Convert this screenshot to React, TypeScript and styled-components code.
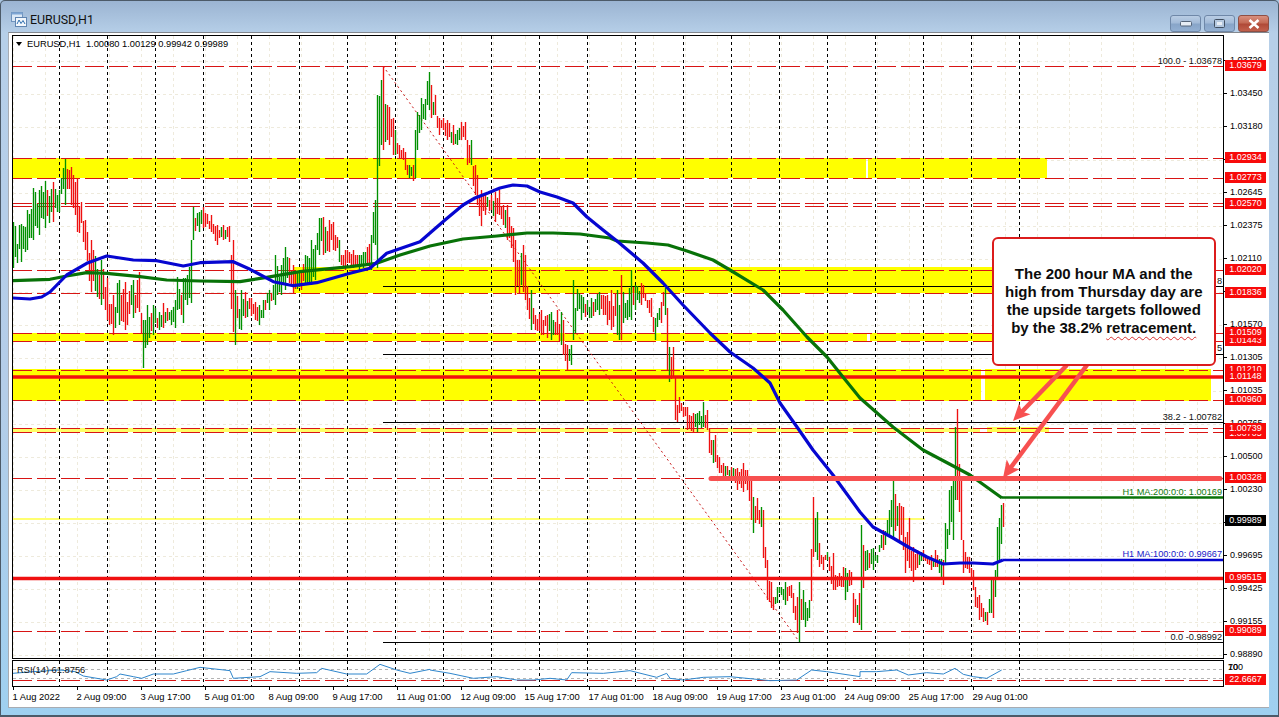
import styled, { createGlobalStyle } from "styled-components";

const GlobalStyle = createGlobalStyle`
  html, body {
    margin: 0;
    height: 100%;
    overflow: hidden;
    background: #a8c4e0;
  }
  * {
    box-sizing: border-box;
  }
`;

const labelFont = `"Liberation Sans", Arial, sans-serif`;

const Window = styled.div`
  width: 100vw;
  height: 100vh;
  display: flex;
  flex-direction: column;
  padding: 0 9px 7px 7px;
  border: 1px solid #4c5a68;
  border-bottom-width: 2px;
  border-radius: 5px 5px 0 0;
  background: linear-gradient(180deg, #9bb4d2 0, #b6cfe8 32px, #b4cde8 55%, #9fd0f0 100%);
`;

const TitleBar = styled.header`
  flex: none;
  height: 31px;
  display: flex;
  align-items: center;
  padding: 5px 0 0 3px;
`;

const TitleIcon = styled.svg`
  width: 16px;
  height: 15px;
  margin-right: 3px;
`;

const TitleText = styled.h1`
  margin: 0;
  font: 400 12.4px Roboto, sans-serif;
  color: #111;
`;

const Controls = styled.div`
  display: flex;
  gap: 3px;
  margin-left: auto;
  align-self: flex-start;
  margin-top: 9px;
`;

const WinButton = styled.div<{ $close?: boolean }>`
  width: 31px;
  height: 17px;
  display: flex;
  align-items: center;
  justify-content: center;
  border: 1px solid ${(p) => (p.$close ? "#8f4f44" : "#6f88a8")};
  border-radius: 3px;
  background: ${(p) =>
    p.$close
      ? "linear-gradient(180deg, #d8907f 0, #c46a55 45%, #b04a38 55%, #c2604c 100%)"
      : "linear-gradient(180deg, #b9cde4 0, #a3bbd8 45%, #88a5c8 55%, #93b0d2 100%)"};
`;

const Client = styled.main`
  flex: 1;
  min-height: 0;
  padding: 2px 0 0 3px;
  background: #fff;
  border: 1px solid #a8acb2;
  border-top-color: #82878e;
  border-right: none;
`;

const Frame = styled.div`
  display: grid;
  grid-template-columns: 1212px 1fr;
  grid-template-rows: 624px 28px 20px;
`;

const PlotPane = styled.div`
  position: relative;
  border: 1px solid #000;
  background: #fff;
`;

const RsiPane = styled(PlotPane)`
  margin-top: 1px;
`;

const PlotSvg = styled.svg`
  display: block;
  width: 100%;
  height: 100%;
`;

const Legend = styled.div`
  position: absolute;
  left: 3px;
  top: 2px;
  display: flex;
  align-items: center;
  font: 9.3px/12px ${labelFont};
  color: #000;
  white-space: pre;
`;

const LegendArrow = styled.span`
  width: 0;
  height: 0;
  margin-right: 5px;
  border-left: 3.5px solid transparent;
  border-right: 3.5px solid transparent;
  border-top: 4px solid #000;
`;

const ChartNote = styled.span<{ $y: number; $color?: string }>`
  position: absolute;
  right: 1px;
  top: ${(p) => p.$y - 36 - 6}px;
  font: 9.2px/12px ${labelFont};
  color: ${(p) => p.$color ?? "#111"};
  white-space: pre;
`;

const Callout = styled.div`
  position: absolute;
  left: 978.5px;
  top: 201px;
  width: 224.5px;
  height: 129px;
  padding-bottom: 1px;
  display: flex;
  align-items: center;
  justify-content: center;
  text-align: center;
  background: #fff;
  border: 2px solid #dc1c1c;
  border-radius: 6px;
  font: 700 15px/18px ${labelFont};
  color: #0c0c0c;
`;

const Squiggle = styled.span`
  text-decoration: underline wavy #d83030 1px;
  text-underline-offset: 3px;
`;

const PriceAxis = styled.div`
  position: relative;
  padding-top: 8.5px;
  font: 9px/11px ${labelFont};
  color: #000;
  height: 624px;
`;

const Tick = styled.div`
  height: 33px;
  display: flex;
  align-items: center;
  gap: 3px;
  &::before {
    content: "";
    width: 3px;
    height: 1px;
    background: #000;
  }
`;

const PriceTag = styled.div<{ $y: number; $black?: boolean }>`
  position: absolute;
  left: 1px;
  top: ${(p) => p.$y}px;
  width: 41px;
  height: 11px;
  text-align: center;
  background: ${(p) => (p.$black ? "#000" : "#f80a0a")};
  color: #fff;
`;

const RsiAxis = styled.div`
  position: relative;
  margin-top: 1px;
  font: 9px/11px ${labelFont};
  color: #000;
`;

const RsiLevel = styled.span`
  position: absolute;
  left: 4px;
  top: 2px;
`;

const RsiLabel = styled.span`
  position: absolute;
  left: 4px;
  top: 3px;
  font: 9.3px/12px ${labelFont};
  color: #111;
`;

const TimeAxis = styled.div`
  grid-column: 1 / -1;
  display: flex;
  padding-left: 1px;
  font: 9.4px/20px ${labelFont};
  color: #000;
`;

const TimeLabel = styled.div`
  flex: none;
  width: 64px;
  position: relative;
  white-space: nowrap;
  text-indent: -0.5px;
  &::before {
    content: "";
    position: absolute;
    left: 0;
    top: 0;
    width: 1px;
    height: 3px;
    background: #000;
  }
`;

type Key = [number, number, number, ("g" | "r")?];

const keys: Key[] = [
  [13, 222, 268], [20, 224, 262], [27, 210, 250], [33, 188, 240], [38, 190, 235], [44, 181, 228],
  [52, 182, 222], [58, 190, 212], [65, 159, 205, "g"], [70, 167, 205], [77, 178, 232], [84, 220, 250],
  [90, 240, 292], [100, 260, 305], [107, 278, 320], [112, 295, 335], [118, 280, 325], [125, 282, 330],
  [132, 280, 318], [138, 272, 312], [143, 320, 368, "g"], [147, 305, 345], [153, 305, 335], [158, 312, 330],
  [163, 303, 328], [170, 310, 325], [175, 300, 328], [177, 277, 310], [183, 278, 323], [187, 275, 305],
  [190, 240, 303, "g"], [193, 207, 240, "g"], [198, 212, 232], [203, 207, 228], [210, 215, 232], [216, 225, 245],
  [222, 225, 240], [228, 226, 242], [232, 240, 332, "r"], [235, 290, 345, "g"], [240, 290, 330], [244, 292, 318],
  [250, 298, 316], [254, 302, 320], [258, 305, 325], [263, 300, 318], [268, 290, 310], [272, 285, 300],
  [275, 255, 305, "g"], [280, 265, 295], [285, 247, 290], [288, 258, 283], [293, 265, 293], [300, 270, 290],
  [305, 255, 285], [310, 240, 285], [315, 245, 280], [318, 218, 255], [322, 217, 255], [328, 220, 252],
  [333, 222, 250], [338, 240, 262], [345, 250, 270], [352, 250, 268], [358, 255, 270], [363, 252, 268],
  [370, 235, 270, "g"], [374, 200, 245, "g"], [377, 95, 268, "g"], [380, 80, 145, "g"], [383, 66, 150, "r"],
  [386, 105, 140], [389, 107, 145], [392, 118, 155], [395, 130, 155], [398, 145, 158], [402, 148, 160],
  [405, 152, 170], [408, 165, 178], [412, 165, 181, "r"], [414, 130, 178, "g"], [416, 112, 150, "g"],
  [420, 98, 130], [424, 99, 120], [428, 72, 110, "g"], [431, 85, 118], [434, 95, 115], [438, 118, 135],
  [442, 118, 130], [447, 120, 140], [452, 125, 145], [456, 130, 145], [460, 122, 140], [464, 122, 140],
  [467, 140, 165], [470, 140, 165, "g"], [474, 165, 195], [477, 175, 205], [480, 190, 226], [484, 193, 215],
  [490, 195, 210], [495, 192, 222], [498, 190, 215], [503, 205, 225], [507, 205, 240], [512, 228, 262],
  [515, 240, 295], [518, 260, 293], [522, 245, 292], [525, 255, 300], [530, 290, 330], [535, 315, 330],
  [540, 310, 335], [546, 315, 338], [550, 312, 340], [556, 310, 335], [560, 312, 345], [563, 320, 355],
  [567, 345, 370], [570, 345, 365], [572, 340, 365, "g"], [573, 280, 340, "g"], [580, 295, 320], [590, 298, 318],
  [598, 292, 315], [603, 295, 315], [607, 295, 325], [611, 290, 330], [616, 290, 335, "g"], [618, 305, 340],
  [621, 275, 340, "r"], [626, 300, 320], [630, 270, 320, "g"], [634, 285, 310], [640, 283, 305], [643, 285, 298],
  [650, 298, 317], [654, 318, 340, "g"], [660, 302, 323], [664, 288, 315, "g"], [667, 308, 370, "r"],
  [669, 347, 382, "g"], [672, 347, 378], [674, 378, 420, "r"], [676, 405, 422], [679, 397, 413], [683, 407, 417],
  [687, 407, 430], [692, 413, 433], [697, 413, 432], [702, 408, 428], [703, 402, 427, "g"], [707, 410, 430],
  [709, 429, 453, "r"], [712, 440, 463, "g"], [714, 435, 462, "r"], [718, 457, 473], [723, 463, 477], [730, 467, 480],
  [737, 468, 490], [742, 463, 492], [747, 470, 490], [750, 480, 520, "r"], [752, 493, 520], [753, 497, 533, "g"],
  [757, 498, 520], [760, 507, 527], [763, 510, 558, "r"], [765, 547, 568], [767, 560, 600, "r"], [770, 582, 608],
  [773, 597, 610], [777, 587, 603], [780, 587, 595], [785, 582, 605, "g"], [790, 585, 598], [793, 593, 613],
  [797, 597, 633, "r"], [799, 582, 642, "g"], [802, 590, 620], [805, 602, 627], [808, 600, 618],
  [812, 522, 618, "g"], [813, 497, 557, "r"], [816, 512, 560], [818, 543, 567], [822, 557, 570], [827, 552, 560, "g"],
  [832, 553, 590], [835, 575, 590], [842, 567, 587], [845, 568, 600, "g"], [852, 570, 590], [853, 593, 623, "r"],
  [858, 593, 625, "r"], [861, 525, 630, "g"], [863, 545, 588], [867, 550, 570], [872, 548, 570], [877, 555, 563],
  [882, 530, 552], [883, 530, 550], [889, 510, 535], [893, 480, 538, "g"], [898, 503, 543], [902, 507, 550],
  [905, 537, 573], [909, 518, 568], [913, 547, 582, "r"], [917, 550, 568], [923, 550, 560], [930, 555, 570],
  [935, 550, 567], [942, 560, 585, "r"], [945, 523, 563, "g"], [949, 490, 535], [952, 480, 540], [955, 427, 500, "g"],
  [957, 409, 500, "r"], [960, 480, 540], [963, 540, 573, "r"], [968, 557, 573], [972, 570, 590], [975, 587, 607],
  [978, 595, 620], [983, 608, 622], [987, 612, 625, "r"], [991, 580, 613, "g"], [993, 578, 618, "r"], [995, 570, 597],
  [997, 527, 580, "g"], [999, 518, 560, "g"], [1002, 483, 540, "g"], [1003, 503, 527, "r"],
];

const rnd = (n: number) => {
  const v = Math.sin(n * 12.9898) * 43758.5453;
  return v - Math.floor(v);
};

function buildBars() {
  const green: string[] = [];
  const red: string[] = [];
  const exact = new Map<number, Key>();
  keys.forEach((k) => exact.set(Math.round((k[0] - 13) / 2), k));
  const span = (x: number) => {
    let j = 0;
    while (j < keys.length - 2 && keys[j + 1][0] < x) j++;
    const [x0, t0, b0] = keys[j];
    const [x1, t1, b1] = keys[j + 1];
    const f = Math.min(1, Math.max(0, (x - x0) / (x1 - x0)));
    return [t0 + (t1 - t0) * f, b0 + (b1 - b0) * f];
  };
  const mid = (x: number) => {
    const [t, b] = span(x);
    return (t + b) / 2;
  };
  for (let i = 0; i <= 495; i++) {
    const x = 13 + i * 2;
    const key = exact.get(i);
    // colour follows the local direction of the price, with a few bars against it
    const rising = mid(x + 5) < mid(x - 5);
    const flip = rnd(i + 7) < 0.16;
    let up = flip ? !rising : rising;
    let top: number, bottom: number;
    if (key) {
      top = key[1];
      bottom = key[2];
      if (key[3]) up = key[3] === "g";
    } else {
      const [t, b] = span(x);
      const h = b - t;
      const len = h * (0.45 + 0.3 * rnd(i));
      top = t + rnd(i + 99) * (h - len);
      bottom = top + len;
    }
    (up ? green : red).push(`M${x + 0.5} ${Math.round(top)}V${Math.round(bottom)}`);
  }
  return { green: green.join(""), red: red.join("") };
}

const bars = buildBars();

const blueMa =
  "12.7,298 30,299 41.7,297 50,292 66.7,275 86.7,263.3 106.7,256 133.3,260 156.7,260.7 183.3,266 200,262.7 233.3,261.7 250,269.3 273.3,281.7 293.3,285.7 316.7,282.7 350,273.3 370,268.3 386.7,253.3 420,241.7 430,233 445,220 463,205 475,198 488,193 500,188 513,185 527,186 540,192 557,197 573,203 587,217 603,230 617,241 643,263 663,283 683,305 710,333 730,352 753,368 770,383 780,403 797,427 813,450 833,475 860,512 873,527 893,538 910,548 927,557 943,564 960,563 973,563 993,564 1003,560";

const greenMa =
  "12.7,280.7 50,279.3 66.7,276 86.7,272.7 106.7,273.3 140,276.7 166.7,280 200,281 240,281.7 266.7,277.3 300,271.7 350,266.7 376.7,263.3 400,255 430,246 463,239 497,236 527,233 553,233 580,234 610,238 617,241 647,243 668,245 687,251 713,260 730,270 763,290 783,310 807,337 827,357 843,377 860,398 893,427 923,450 957,468 970,475 1002,498";

const rsiPoints: [number, number][] = [
  ...[[38, 580], [100, 575], [180, 570], [225, 575], [250, 588], [320, 600], [350, 590], [360, 582], [400, 590], [425, 595], [460, 582], [520, 582], [560, 572], [600, 562], [690, 572], [700, 595], [780, 590], [810, 575], [890, 580], [950, 578], [965, 565], [1040, 582], [1100, 582], [1140, 553], [1190, 570], [1230, 580], [1290, 568]].map(([x, y]) => [x / 3, y / 3 + 480] as [number, number]),
  ...[[0, 570], [60, 580], [130, 595], [200, 590], [260, 600], [310, 600], [360, 595], [410, 600], [425, 578], [520, 580], [600, 572], [680, 592], [710, 580], [720, 595], [760, 600], [820, 592], [900, 590], [1020, 602], [1100, 600], [1145, 570], [1190, 575], [1290, 590]].map(([x, y]) => [x / 3 + 430, y / 3 + 480] as [number, number]),
  ...[[0, 575], [50, 575], [110, 570], [145, 585], [200, 578], [250, 582], [285, 565], [310, 583], [340, 590], [380, 595], [425, 570]].map(([x, y]) => [x / 3 + 860, y / 3 + 480] as [number, number]),
];

const sessionLines = Array.from({ length: 21 }, (_, k) => 59.5 + 48 * k);
const gridColumns = Array.from({ length: 38 }, (_, k) => 13.5 + 32 * k);
const gridRows = Array.from({ length: 19 }, (_, k) => 61.5 + 33 * k);

const bands = [
  { x: 13, y: 158, w: 853, h: 20, fill: "#ffff00" },
  { x: 868, y: 158, w: 179, h: 20, fill: "#ffff00" },
  { x: 293, y: 267, w: 730, h: 26, fill: "#ffff00" },
  { x: 13, y: 333, w: 854, h: 8, fill: "#ffff00" },
  { x: 870, y: 333, w: 140, h: 8, fill: "#ffff00" },
  { x: 13, y: 369, w: 968, h: 32, fill: "#ffff00" },
  { x: 985, y: 369, w: 226, h: 32, fill: "#ffff00" },
  { x: 13, y: 428, w: 967, h: 4, fill: "#ffff66" },
  { x: 987, y: 427, w: 62, h: 5, fill: "#ffff50" },
];

const dashedLevels = [66.5, 158.5, 178.5, 203.5, 206.5, 270.5, 293.5, 333.5, 341.5, 370.5, 400.5, 428.5, 432.5, 478.5, 631.5];
const fibLevels = [286.5, 354.5, 422.5, 642.5];

const priceTicks = [
  "1.03720", "1.03450", "1.03180", "1.02910", "1.02645", "1.02375", "1.02110", "1.01840", "1.01570", "1.01305",
  "1.01035", "1.00765", "1.00500", "1.00230", "0.99960", "0.99695", "0.99425", "0.99155", "0.98890",
];

const priceTags: { y: number; text: string; black?: boolean }[] = [
  { y: 65.5, text: "1.03679" },
  { y: 157.5, text: "1.02934" },
  { y: 177.5, text: "1.02773" },
  { y: 203, text: "1.02570" },
  { y: 269.5, text: "1.02020" },
  { y: 292.5, text: "1.01836" },
  { y: 340.7, text: "1.01443" },
  { y: 332.7, text: "1.01509" },
  { y: 369.5, text: "1.01210" },
  { y: 376.5, text: "1.01148" },
  { y: 399.5, text: "1.00960" },
  { y: 433, text: "1.00705" },
  { y: 428.3, text: "1.00739" },
  { y: 477.5, text: "1.00328" },
  { y: 520.7, text: "0.99989", black: true },
  { y: 577.7, text: "0.99515" },
  { y: 630.5, text: "0.99089" },
];

const timeLabels = [
  "1 Aug 2022", "2 Aug 09:00", "3 Aug 17:00", "5 Aug 01:00", "8 Aug 09:00", "9 Aug 17:00", "11 Aug 01:00", "12 Aug 09:00",
  "15 Aug 17:00", "17 Aug 01:00", "18 Aug 09:00", "19 Aug 17:00", "23 Aug 01:00", "24 Aug 09:00", "25 Aug 17:00", "29 Aug 01:00",
];

function Arrow({ from, to }: { from: [number, number]; to: [number, number] }) {
  const dx = to[0] - from[0];
  const dy = to[1] - from[1];
  const len = Math.hypot(dx, dy);
  const ux = dx / len;
  const uy = dy / len;
  const base = (back: number, side: number) =>
    `${to[0] - ux * back - uy * side},${to[1] - uy * back + ux * side}`;
  return (
    <g fill="#f75050" stroke="#f75050">
      <line x1={from[0]} y1={from[1]} x2={to[0] - ux * 10} y2={to[1] - uy * 10} strokeWidth="4.5" />
      <polygon points={`${to[0]},${to[1]} ${base(17, 8)} ${base(13, 0)} ${base(17, -8)}`} stroke="none" />
    </g>
  );
}

function MainChart() {
  return (
    <PlotSvg viewBox="13 36 1210 622" preserveAspectRatio="none">
      <g stroke="#eeeadc" strokeWidth="1" strokeDasharray="3 3" shapeRendering="crispEdges">
        {gridColumns.map((x) => (
          <line key={x} x1={x} x2={x} y1={36} y2={658} />
        ))}
        {gridRows.map((y) => (
          <line key={y} x1={13} x2={1223} y1={y} y2={y} />
        ))}
      </g>
      {bands.map((b) => (
        <rect key={`${b.x}-${b.y}`} x={b.x} y={b.y} width={b.w} height={b.h} fill={b.fill} />
      ))}
      <line x1={13} x2={925} y1={519} y2={519} stroke="#ffff70" strokeWidth="2" />
      <g stroke="#d81414" strokeWidth="1" strokeDasharray="19 5" shapeRendering="crispEdges">
        {dashedLevels.map((y) => (
          <line key={y} x1={13} x2={1223} y1={y} y2={y} />
        ))}
      </g>
      <g stroke="#000" strokeWidth="1" shapeRendering="crispEdges">
        {fibLevels.map((y) => (
          <line key={y} x1={383} x2={1223} y1={y} y2={y} />
        ))}
      </g>
      <line x1={383} y1={66} x2={798} y2={640} stroke="#c81818" strokeWidth="1" strokeDasharray="2 3" />
      <g stroke="#000" strokeWidth="1" strokeDasharray="3 3" shapeRendering="crispEdges">
        {sessionLines.map((x) => (
          <line key={x} x1={x} x2={x} y1={36} y2={658} />
        ))}
      </g>
      <path d={bars.red} stroke="#ee1010" strokeWidth="1.35" fill="none" />
      <path d={bars.green} stroke="#009000" strokeWidth="1.35" fill="none" />
      <line x1={13} x2={1223} y1={377} y2={377} stroke="#f21010" strokeWidth="3.5" />
      <line x1={13} x2={1223} y1={578.5} y2={578.5} stroke="#f01010" strokeWidth="3.5" />
      <polyline points={greenMa} fill="none" stroke="#087208" strokeWidth="3.2" strokeLinejoin="round" />
      <line x1={1002} x2={1223} y1={497.5} y2={497.5} stroke="#087208" strokeWidth="2.4" />
      <polyline points={blueMa} fill="none" stroke="#0606d0" strokeWidth="3.2" strokeLinejoin="round" />
      <line x1={1003} x2={1223} y1={560} y2={560} stroke="#0606d0" strokeWidth="2.4" />
      <line x1={711} x2={1220} y1={478.5} y2={478.5} stroke="#f75050" strokeWidth="5" strokeLinecap="round" />
      <Arrow from={[1067, 365]} to={[1013, 421]} />
      <Arrow from={[1087, 365]} to={[1003, 478]} />
    </PlotSvg>
  );
}

function RsiChart() {
  return (
    <PlotSvg viewBox="13 661 1210 25" preserveAspectRatio="none">
      <g stroke="#b4b4b4" strokeWidth="1" strokeDasharray="3 3" shapeRendering="crispEdges">
        <line x1={13} x2={1223} y1={669.5} y2={669.5} />
        <line x1={13} x2={1223} y1={678.5} y2={678.5} />
      </g>
      <line x1={13} x2={1223} y1={680.5} y2={680.5} stroke="#d81414" strokeDasharray="19 5" shapeRendering="crispEdges" />
      <g stroke="#000" strokeWidth="1" strokeDasharray="3 3" shapeRendering="crispEdges">
        {sessionLines.map((x) => (
          <line key={x} x1={x} x2={x} y1={661} y2={686} />
        ))}
      </g>
      <polyline points={rsiPoints.map((p) => p.join(",")).join(" ")} fill="none" stroke="#2f86cc" strokeWidth="1" />
    </PlotSvg>
  );
}

export default function App() {
  return (
    <>
      <GlobalStyle />
      <Window>
        <TitleBar>
          <TitleIcon viewBox="0 0 16 15">
            <rect x="0.5" y="0.5" width="11" height="9" fill="#dbe8f6" stroke="#6f93bd" />
            <rect x="0.5" y="0.5" width="11" height="2" fill="#7ea6d4" />
            <rect x="4.5" y="5.5" width="11" height="9" fill="#f2f7fc" stroke="#5f84b0" />
            <path d="M6 12 L8 8 L10 11.5 L12 8.5 L14 12" fill="none" stroke="#2f6fb0" strokeWidth="1" />
          </TitleIcon>
          <TitleText>EURUSD,H1</TitleText>
          <Controls>
            <WinButton>
              <svg width="12" height="6" viewBox="0 0 12 6">
                <rect x="0.5" y="0.5" width="11" height="4.5" rx="1" fill="#e6edf5" stroke="#55657a" />
              </svg>
            </WinButton>
            <WinButton>
              <svg width="11" height="9" viewBox="0 0 11 9">
                <rect x="0.5" y="0.5" width="10" height="8" rx="1" fill="#b4c8df" stroke="#404e60" />
                <rect x="3" y="3" width="5" height="3" fill="#e8eef5" />
              </svg>
            </WinButton>
            <WinButton $close>
              <svg width="12" height="10" viewBox="0 0 12 10">
                <path d="M1.5 1 L10.5 9 M10.5 1 L1.5 9" stroke="#fff" strokeWidth="2.6" />
              </svg>
            </WinButton>
          </Controls>
        </TitleBar>
        <Client>
          <Frame>
            <PlotPane>
              <MainChart />
              <Legend>
                <LegendArrow />
                {"EURUSD,H1  1.00080 1.00129 0.99942 0.99989"}
              </Legend>
              <ChartNote $y={60.5}>100.0 - 1.03678</ChartNote>
              <ChartNote $y={280.5}>8</ChartNote>
              <ChartNote $y={348}>5</ChartNote>
              <ChartNote $y={417}>38.2 - 1.00782</ChartNote>
              <ChartNote $y={492} $color="#107a10">H1 MA:200:0:0: 1.00169</ChartNote>
              <ChartNote $y={554} $color="#1818c8">H1 MA:100:0:0: 0.99667</ChartNote>
              <ChartNote $y={636.5}>0.0 -0.98992</ChartNote>
              <Callout>
                <div>
                  The 200 hour MA and the
                  <br />
                  high from Thursday day are
                  <br />
                  the upside targets followed
                  <br />
                  by the 38.2% <Squiggle>retracement.</Squiggle>
                </div>
              </Callout>
            </PlotPane>
            <PriceAxis>
              {priceTicks.map((t) => (
                <Tick key={t}>{t}</Tick>
              ))}
              {priceTags.map((t) => (
                <PriceTag key={t.text} $y={t.y - 5.5 - 35} $black={t.black}>
                  {t.text}
                </PriceTag>
              ))}
            </PriceAxis>
            <RsiPane>
              <RsiChart />
              <RsiLabel>RSI(14) 61.8756</RsiLabel>
            </RsiPane>
            <RsiAxis>
              <RsiLevel>100</RsiLevel>
              <RsiLevel>70</RsiLevel>
              <PriceTag $y={13.5}>22.6667</PriceTag>
            </RsiAxis>
            <TimeAxis>
              {timeLabels.map((t) => (
                <TimeLabel key={t}>{t}</TimeLabel>
              ))}
            </TimeAxis>
          </Frame>
        </Client>
      </Window>
    </>
  );
}
